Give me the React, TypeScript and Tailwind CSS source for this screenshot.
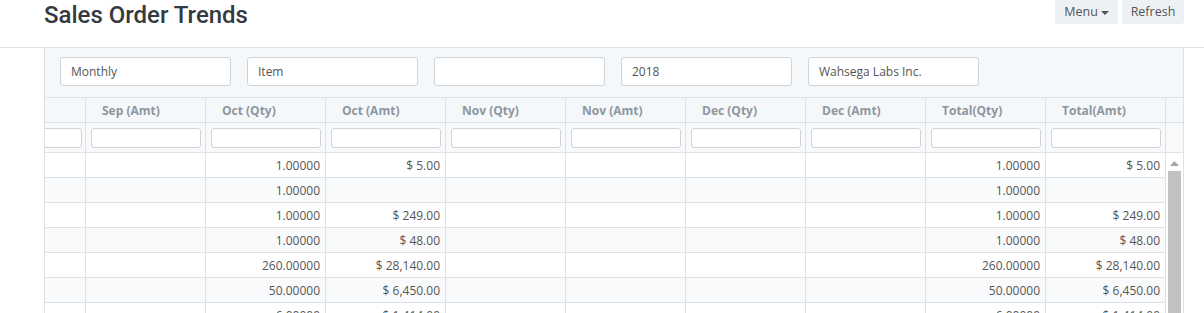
import React from "react";

const font = { fontFamily: '"Open Sans", "Noto Sans", sans-serif' };

const headers = ["Sep (Amt)", "Oct (Qty)", "Oct (Amt)", "Nov (Qty)", "Nov (Amt)", "Dec (Qty)", "Dec (Amt)", "Total(Qty)", "Total(Amt)"];

// [octQty, octAmt, totalQty, totalAmt]
const rows = [
  ["1.00000", "$ 5.00", "1.00000", "$ 5.00"],
  ["1.00000", "", "1.00000", ""],
  ["1.00000", "$ 249.00", "1.00000", "$ 249.00"],
  ["1.00000", "$ 48.00", "1.00000", "$ 48.00"],
  ["260.00000", "$ 28,140.00", "260.00000", "$ 28,140.00"],
  ["50.00000", "$ 6,450.00", "50.00000", "$ 6,450.00"],
  ["6.00000", "$ 1,414.00", "6.00000", "$ 1,414.00"],
];

function Cell({ children }: { children?: React.ReactNode }) {
  return (
    <div className="w-[120px] shrink-0 border-r border-[#dde2e7] h-full flex items-center justify-end pr-[5px] pt-[2px]">
      {children}
    </div>
  );
}

export default function App() {
  const filters = ["Monthly", "Item", "", "2018", "Wahsega Labs Inc."];
  return (
    <div className="w-[1204px] h-[313px] overflow-hidden bg-white relative" style={font}>
      {/* Page header */}
      <div className="h-[48px] border-b border-[#dde2e7] flex items-start justify-between pl-[44px] pr-[20px]">
        <h1
          className="text-[24px] leading-[30px] font-medium text-[#343a40]"
          style={{ fontFamily: 'Roboto, "Open Sans", sans-serif' }}
        >
          Sales Order Trends
        </h1>
        <div className="flex gap-[4px]">
          <button className="w-[63px] h-[24px] bg-[#eef1f4] rounded-b-[3px] text-[12.5px] text-[#555] flex items-center justify-center gap-[3px]">
            Menu
            <span className="w-0 h-0 border-l-[4px] border-r-[4px] border-t-[4px] border-l-transparent border-r-transparent border-t-[#555] mt-[2px]" />
          </button>
          <button className="w-[62px] h-[24px] bg-[#eef1f4] rounded-b-[3px] text-[12.5px] text-[#555]">Refresh</button>
        </div>
      </div>

      {/* Panel */}
      <div className="ml-[44px] w-[1140px] h-[300px] border-l border-r border-[#dde2e7] bg-[#f5f8fb]">
        <div className="flex gap-[16px] pl-[15px] pt-[9px] h-[49px]">
          {filters.map((f, i) => (
            <div key={i} className="w-[171px] h-[29px] bg-white border border-[#ced4da] rounded-[3px] pl-[10px] flex items-center text-[12px] text-[#555]">
              {f}
            </div>
          ))}
        </div>

        {/* Table */}
        <div className="border-t border-[#dde2e7] text-[12px]">
          <div className="flex h-[25px] border-b border-[#dde2e7] bg-[#f5f8fb]">
            <div className="w-[41px] shrink-0 border-r border-[#dde2e7]" />
            {headers.map((h) => (
              <div key={h} className="w-[120px] shrink-0 border-r border-[#dde2e7] pl-[16px] pt-[2px] flex items-center font-bold text-[#8e969e]">
                {h}
              </div>
            ))}
            <div className="flex-1" />
          </div>
          <div className="flex h-[30px] border-b border-[#dde2e7] bg-[#f7f9fa]">
            <div className="w-[41px] shrink-0 border-r border-[#dde2e7] flex items-center justify-end pr-[3px] overflow-hidden">
              <div className="w-[60px] shrink-0 h-[20px] bg-white border border-[#ced4da] rounded-[3px]" />
            </div>
            {headers.map((h) => (
              <div key={h} className="w-[120px] shrink-0 border-r border-[#dde2e7] flex items-center pl-[5px]">
                <div className="w-[110px] h-[20px] bg-white border border-[#ced4da] rounded-[3px]" />
              </div>
            ))}
            <div className="flex-1" />
          </div>

          <div className="flex">
            <div className="w-[1121px]">
              {rows.map((r, i) => (
                <div key={i} className={"flex h-[25px] border-b border-[#dde2e7] text-[#555] " + (i % 2 === 1 ? "bg-[#f9fafb]" : "bg-white")}>
                  <div className="w-[41px] shrink-0 border-r border-[#dde2e7]" />
                  <Cell />
                  <Cell>{r[0]}</Cell>
                  <Cell>{r[1]}</Cell>
                  <Cell />
                  <Cell />
                  <Cell />
                  <Cell />
                  <Cell>{r[2]}</Cell>
                  <Cell>{r[3]}</Cell>
                </div>
              ))}
            </div>
            {/* Scrollbar */}
            <div className="flex-1 bg-white flex flex-col items-center pt-[8px]">
              <svg width="9" height="5" viewBox="0 0 9 5">
                <path d="M0 5 L4.5 0 L9 5 Z" fill="#a3a3a3" />
              </svg>
              <div className="mt-[5px] w-[13px] h-[200px] bg-[#c1c1c1]" />
            </div>
          </div>
        </div>
      </div>
    </div>
  );
}
